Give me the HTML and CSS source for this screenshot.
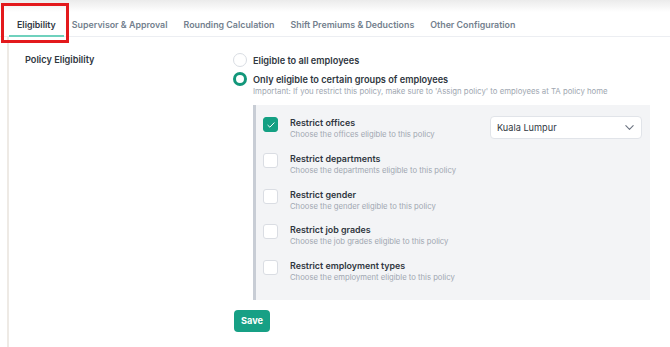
FILE: index.html
```html
<!doctype html>
<html lang="en">
    <head>
        <meta charset="UTF-8" />
        <meta name="viewport" content="width=device-width, initial-scale=1.0" />
        <title>Policy Eligibility</title>
        <link rel="stylesheet" href="styles.css">
    </head>
    <body>
        <div class="page">
            <nav class="tabs">
                <div class="tab active">Eligibility</div>
                <div class="tab">Supervisor &amp; Approval</div>
                <div class="tab">Rounding Calculation</div>
                <div class="tab">Shift Premiums &amp; Deductions</div>
                <div class="tab">Other Configuration</div>
            </nav>
            <div class="highlight"></div>

            <div class="content">
                <div class="field-label">Policy Eligibility</div>
                <div class="field-body">
                    <label class="radio-row">
                        <span class="radio"></span>
                        <span class="radio-text">Eligible to all employees</span>
                    </label>
                    <label class="radio-row">
                        <span class="radio checked"></span>
                        <span class="radio-text">Only eligible to certain groups of employees</span>
                    </label>
                    <div class="hint">Important: If you restrict this policy, make sure to 'Assign policy' to employees at TA policy home</div>

                    <div class="panel">
                        <div class="option">
                            <span class="checkbox checked">
                                <svg viewBox="0 0 16 16" width="10" height="10">
                                    <path d="M3 8.5l3.2 3L13 4.5" fill="none" stroke="#fff" stroke-width="1.6" stroke-linecap="round" stroke-linejoin="round" />
                                </svg>
                            </span>
                            <div class="option-text">
                                <div class="option-title">Restrict offices</div>
                                <div class="option-desc">Choose the offices eligible to this policy</div>
                            </div>
                            <div class="select">
                                <span>Kuala Lumpur</span>
                                <svg viewBox="0 0 12 12" width="11" height="11">
                                    <path d="M2 4l4 4 4-4" fill="none" stroke="#6b7380" stroke-width="1.2" stroke-linecap="round" stroke-linejoin="round" />
                                </svg>
                            </div>
                        </div>
                        <div class="option">
                            <span class="checkbox"></span>
                            <div class="option-text">
                                <div class="option-title">Restrict departments</div>
                                <div class="option-desc">Choose the departments eligible to this policy</div>
                            </div>
                        </div>
                        <div class="option">
                            <span class="checkbox"></span>
                            <div class="option-text">
                                <div class="option-title">Restrict gender</div>
                                <div class="option-desc">Choose the gender eligible to this policy</div>
                            </div>
                        </div>
                        <div class="option">
                            <span class="checkbox"></span>
                            <div class="option-text">
                                <div class="option-title">Restrict job grades</div>
                                <div class="option-desc">Choose the job grades eligible to this policy</div>
                            </div>
                        </div>
                        <div class="option">
                            <span class="checkbox"></span>
                            <div class="option-text">
                                <div class="option-title">Restrict employment types</div>
                                <div class="option-desc">Choose the employment eligible to this policy</div>
                            </div>
                        </div>
                    </div>

                    <button class="save">Save</button>
                </div>
            </div>
        </div>
    </body>
</html>
```

FILE: styles.css
```css
body {
    margin: 0;
    font-family: Inter, "Noto Sans", sans-serif;
    color: #30373f;
    background: #fff;
}

.page {
    position: relative;
    height: 347px;
    overflow: hidden;
    background: linear-gradient(#ebebeb, #fff 12px);
}

.tabs {
    display: flex;
    padding: 18px 0 0 9px;
    border-bottom: 1px solid #eceef2;
}

.tab {
    padding: 0 8px 3px;
    line-height: 14px;
    font-size: 8.85px;
    font-weight: 600;
    color: #737f8e;
    border-bottom: 2px solid transparent;
    margin-bottom: -1px;
    white-space: nowrap;
}

.tab.active {
    color: #30373f;
    border-bottom-color: #6fd1bd;
}

.highlight {
    position: absolute;
    left: 1px;
    top: 3px;
    width: 62px;
    height: 34px;
    border: 3px solid #e3191c;
}

.content {
    display: flex;
    margin-left: 7px;
    padding: 15px 0 0 16px;
    border-left: 2px solid #eeeae5;
    min-height: 320px;
}

.field-label {
    width: 208px;
    flex-shrink: 0;
    font-size: 9.2px;
    font-weight: 600;
    line-height: 14px;
    padding-top: 1px;
}

.field-body {
    flex: 1;
    padding-right: 20px;
}

.radio-row {
    display: flex;
    align-items: center;
    gap: 6px;
    height: 16px;
    margin-bottom: 3px;
}

.radio {
    width: 12px;
    height: 12px;
    border: 1px solid #d9dde3;
    border-radius: 50%;
    background: #fff;
    flex-shrink: 0;
}

.radio.checked {
    width: 8px;
    height: 8px;
    border: 3px solid #12977a;
}

.radio-text {
    font-size: 9.2px;
    font-weight: 600;
}

.hint {
    margin: -5px 0 0 20px;
    font-size: 7.8px;
    line-height: 12px;
    color: #a0a7b1;
}

.panel {
    margin: 8px 0 0 20px;
    padding: 6px 8px 10px 7px;
    background: #f3f4f6;
    border-left: 3px solid #c8cdd5;
}

.option {
    display: flex;
    align-items: flex-start;
    padding: 6px 0 5.75px;
}

.checkbox {
    display: flex;
    align-items: center;
    justify-content: center;
    width: 13px;
    height: 13px;
    border: 1px solid #dadde3;
    border-radius: 3px;
    background: #fff;
    flex-shrink: 0;
}

.checkbox.checked {
    background: #14a083;
    border-color: #14a083;
}

.option-text {
    flex: 1;
    margin-left: 12px;
}

.option-title {
    font-size: 8.9px;
    font-weight: 600;
    line-height: 12px;
}

.option-desc {
    font-size: 7.7px;
    line-height: 12px;
    color: #a0a7b1;
}

.select {
    display: flex;
    align-items: center;
    justify-content: space-between;
    width: 138px;
    height: 21px;
    margin-top: -1px;
    padding: 0 6px;
    background: #fff;
    border: 1px solid #e1e4e9;
    border-radius: 4px;
    font-size: 9.2px;
    color: #30373f;
}

.save {
    margin: 10px 0 0 1px;
    width: 36px;
    height: 22px;
    padding: 0;
    border: none;
    border-radius: 4px;
    background: #17a085;
    color: #fff;
    font-family: inherit;
    font-size: 9.2px;
    font-weight: 700;
}
```
